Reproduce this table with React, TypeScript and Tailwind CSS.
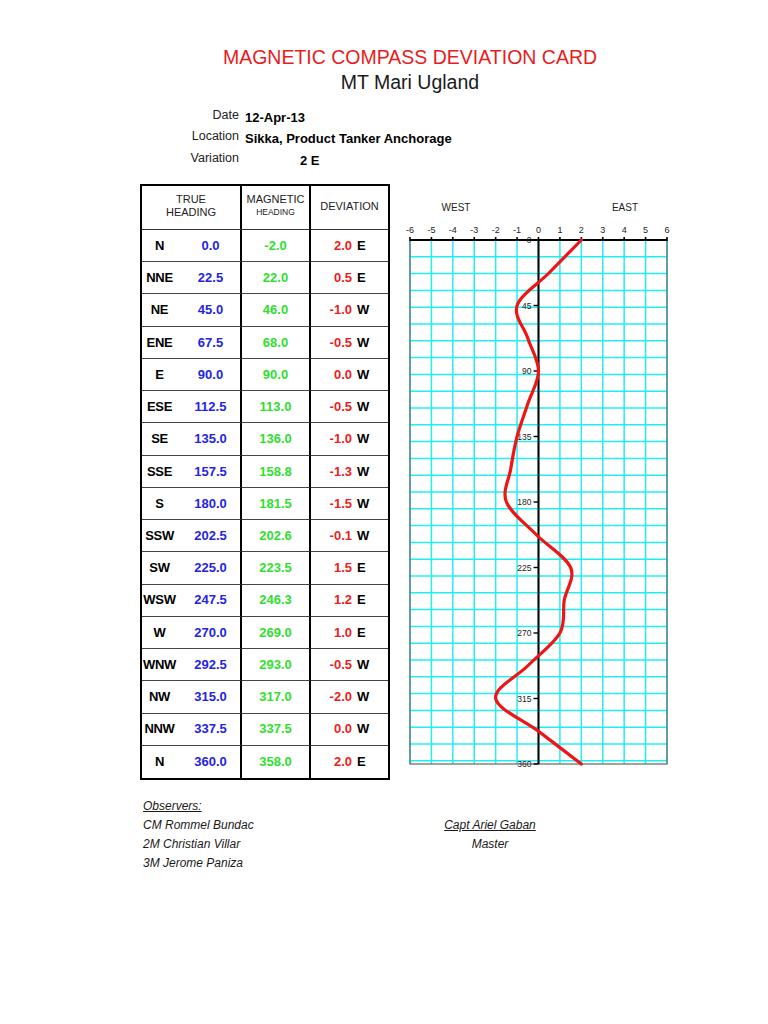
const rows = [
  { point: "N", trueH: "0.0", mag: "-2.0", dev: "2.0", dir: "E" },
  { point: "NNE", trueH: "22.5", mag: "22.0", dev: "0.5", dir: "E" },
  { point: "NE", trueH: "45.0", mag: "46.0", dev: "-1.0", dir: "W" },
  { point: "ENE", trueH: "67.5", mag: "68.0", dev: "-0.5", dir: "W" },
  { point: "E", trueH: "90.0", mag: "90.0", dev: "0.0", dir: "W" },
  { point: "ESE", trueH: "112.5", mag: "113.0", dev: "-0.5", dir: "W" },
  { point: "SE", trueH: "135.0", mag: "136.0", dev: "-1.0", dir: "W" },
  { point: "SSE", trueH: "157.5", mag: "158.8", dev: "-1.3", dir: "W" },
  { point: "S", trueH: "180.0", mag: "181.5", dev: "-1.5", dir: "W" },
  { point: "SSW", trueH: "202.5", mag: "202.6", dev: "-0.1", dir: "W" },
  { point: "SW", trueH: "225.0", mag: "223.5", dev: "1.5", dir: "E" },
  { point: "WSW", trueH: "247.5", mag: "246.3", dev: "1.2", dir: "E" },
  { point: "W", trueH: "270.0", mag: "269.0", dev: "1.0", dir: "E" },
  { point: "WNW", trueH: "292.5", mag: "293.0", dev: "-0.5", dir: "W" },
  { point: "NW", trueH: "315.0", mag: "317.0", dev: "-2.0", dir: "W" },
  { point: "NNW", trueH: "337.5", mag: "337.5", dev: "0.0", dir: "W" },
  { point: "N", trueH: "360.0", mag: "358.0", dev: "2.0", dir: "E" },
];

const info = [
  { label: "Date", value: "12-Apr-13", pad: "pl-0" },
  { label: "Location", value: "Sikka, Product Tanker Anchorage", pad: "pl-0" },
  { label: "Variation", value: "2 E", pad: "pl-[55px]" },
];

function DeviationTable() {
  return (
    <div className="w-[250px] h-[596px] shrink-0 border-2 border-black grid grid-cols-[100px_69px_1fr] grid-rows-[44px_repeat(17,minmax(0,1fr))] text-[13px] font-bold">
      <div className="border-r-2 border-b border-black border-b-[#333] flex flex-col items-center justify-center pb-[3px] text-[11px] leading-[13px] font-normal text-[#222]">
        <span>TRUE</span>
        <span>HEADING</span>
      </div>
      <div className="border-r-2 border-b border-black border-b-[#333] flex flex-col items-center justify-center pb-[3px] font-normal text-[#222]">
        <span className="text-[11px] leading-[13px]">MAGNETIC</span>
        <span className="text-[8.5px] leading-[13px]">HEADING</span>
      </div>
      <div className="border-b border-b-[#333] flex items-center justify-center pb-[2px] text-[11px] font-normal text-[#222]">
        DEVIATION
      </div>

      {rows.map((r, i) => {
        const last = i === rows.length - 1;
        return [
          <div key={`a${i}`} className={`border-r-2 border-black flex items-center ${last ? "" : "border-b border-b-[#444]"}`}>
            <span className="w-[35px] text-center text-black tracking-[-0.3px]">{r.point}</span>
            <span className="flex-1 pl-[4px] text-center text-[#2424e0]">{r.trueH}</span>
          </div>,
          <div key={`b${i}`} className={`border-r-2 border-black flex items-center justify-center text-[#2fe02f] ${last ? "" : "border-b border-b-[#444]"}`}>
            {r.mag}
          </div>,
          <div key={`c${i}`} className={`flex items-center ${last ? "" : "border-b border-b-[#444]"}`}>
            <span className="w-[41px] text-right text-[#ee1c1c]">{r.dev}</span>
            <span className="ml-[5px] text-black">{r.dir}</span>
          </div>,
        ];
      })}
    </div>
  );
}

function DeviationChart() {
  const left = 20;
  const right = 277;
  const top = 56;
  const bottom = 580;
  const unit = (right - left) / 12;
  const zeroX = left + 6 * unit;
  const yScale = (bottom - top) / 360;

  const pts = rows.map((r, i) => [zeroX + parseFloat(r.dev) * unit, top + i * 22.5 * yScale]);
  let d = `M ${pts[0][0]} ${pts[0][1]}`;
  for (let i = 0; i < pts.length - 1; i++) {
    const p0 = pts[i - 1] || pts[i];
    const p1 = pts[i];
    const p2 = pts[i + 1];
    const p3 = pts[i + 2] || p2;
    const c1x = p1[0] + (p2[0] - p0[0]) / 6;
    const c1y = p1[1] + (p2[1] - p0[1]) / 6;
    const c2x = p2[0] - (p3[0] - p1[0]) / 6;
    const c2y = p2[1] - (p3[1] - p1[1]) / 6;
    d += ` C ${c1x} ${c1y} ${c2x} ${c2y} ${p2[0]} ${p2[1]}`;
  }

  const hLines = Array.from({ length: 31 }, (_, k) => top + 16.8 * (k + 1));
  const vUnits = Array.from({ length: 13 }, (_, k) => k - 6);
  const yLabels = [0, 45, 90, 135, 180, 225, 270, 315, 360];
  const font = "Liberation Sans, Arial, sans-serif";

  return (
    <svg width="290" height="596" viewBox="0 0 290 596" className="shrink-0">
      <text x="66" y="26.5" fontSize="10" fontFamily={font} textAnchor="middle" fill="#222">WEST</text>
      <text x="235" y="26.5" fontSize="10" fontFamily={font} textAnchor="middle" fill="#222">EAST</text>

      {vUnits.map((u) => (
        <text key={`xl${u}`} x={zeroX + u * unit} y="48.5" fontSize="9" fontFamily={font} textAnchor="middle" fill="#222">
          {u}
        </text>
      ))}

      {hLines.map((y) => (
        <line key={`h${y}`} x1={left} x2={right} y1={y} y2={y} stroke="#22eef2" strokeWidth="1.5" />
      ))}
      {vUnits.map((u) => (
        <line key={`v${u}`} x1={zeroX + u * unit} x2={zeroX + u * unit} y1={top} y2={bottom} stroke="#22eef2" strokeWidth="1.5" />
      ))}

      <rect x={left} y={top} width={right - left} height={bottom - top} fill="none" stroke="#666" strokeWidth="1.2" />

      <line x1={left} x2={right} y1={top} y2={top} stroke="#000" strokeWidth="2" />
      {vUnits.map((u) => (
        <line key={`t${u}`} x1={zeroX + u * unit} x2={zeroX + u * unit} y1={top - 3} y2={top + 1} stroke="#000" strokeWidth="1.6" />
      ))}

      <line x1={zeroX} x2={zeroX} y1={top} y2={bottom} stroke="#000" strokeWidth="2" />
      {yLabels.map((h) => (
        <g key={`y${h}`}>
          <line x1={zeroX - 5} x2={zeroX} y1={top + h * yScale} y2={top + h * yScale} stroke="#000" strokeWidth="1.4" />
          <text x={zeroX - 7} y={top + h * yScale + 3} fontSize="8.5" fontFamily={font} textAnchor="end" fill="#222">
            {h}
          </text>
        </g>
      ))}

      <path d={d} fill="none" stroke="#f01414" strokeWidth="3.2" strokeLinecap="round" strokeLinejoin="round" />
    </svg>
  );
}

export default function App() {
  return (
    <div className="w-[768px] h-[1024px] bg-white font-['Liberation_Sans',Arial,sans-serif] text-[#222] pt-[45px]">
      {/* Title */}
      <div className="ml-[140px] w-[540px] text-center text-[19.5px] leading-[25px]">
        <div className="text-[#e81c1c]">MAGNETIC COMPASS DEVIATION CARD</div>
        <div className="text-[#1a1a1a]">MT Mari Ugland</div>
      </div>

      {/* Voyage info */}
      <div className="ml-[140px] mt-[10.5px] flex flex-col">
        {info.map((row) => (
          <div key={row.label} className="h-[21.5px] flex items-start">
            <span className="w-[99px] text-right text-[12.5px] leading-[19px]">{row.label}</span>
            <span className={`ml-[6px] text-[13px] leading-[23px] font-bold text-black ${row.pad}`}>{row.value}</span>
          </div>
        ))}
      </div>

      {/* Table and chart */}
      <div className="ml-[140px] mt-[14px] flex">
        <DeviationTable />
        <DeviationChart />
      </div>

      {/* Signatures */}
      <div className="mt-[16.5px] flex text-[12px] leading-[19px] italic text-[#1a1a1a]">
        <div className="ml-[143px] w-[297px] flex flex-col">
          <span className="underline">Observers:</span>
          <span>CM Rommel Bundac</span>
          <span>2M Christian Villar</span>
          <span>3M Jerome Paniza</span>
        </div>
        <div className="w-[100px] pt-[19px] flex flex-col items-center">
          <span className="underline whitespace-nowrap">Capt Ariel Gaban</span>
          <span>Master</span>
        </div>
      </div>
    </div>
  );
}
